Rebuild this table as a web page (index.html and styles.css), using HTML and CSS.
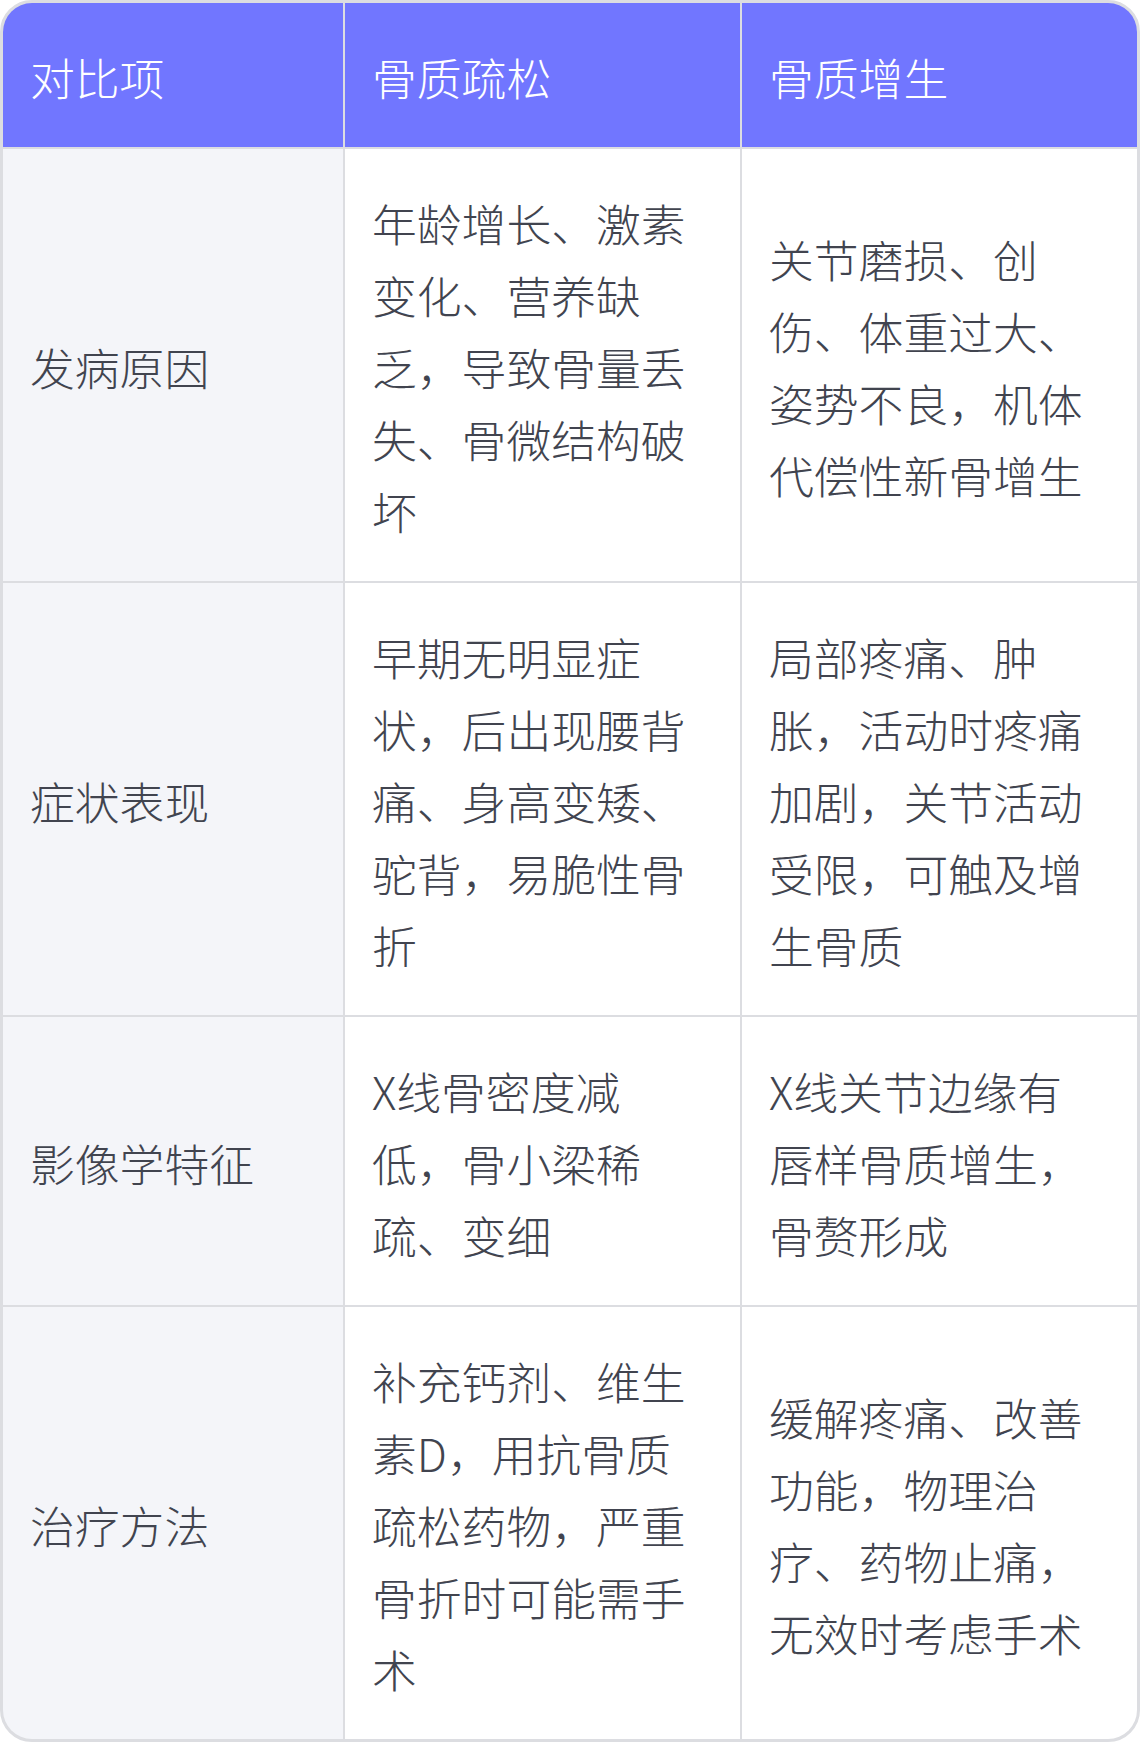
FILE: index.html
```html
<!DOCTYPE html>
<html lang="zh-CN">
<head>
<meta charset="utf-8">
<title>骨质疏松与骨质增生对比</title>
<link rel="stylesheet" href="styles.css">
</head>
<body>
<div class="table">
  <div class="cell head">对比项</div>
  <div class="cell head">骨质疏松</div>
  <div class="cell head">骨质增生</div>

  <div class="cell label">发病原因</div>
  <div class="cell">年龄增长、激素变化、营养缺乏，导致骨量丢失、骨微结构破坏</div>
  <div class="cell">关节磨损、创伤、体重过大、姿势不良，机体代偿性新骨增生</div>

  <div class="cell label">症状表现</div>
  <div class="cell">早期无明显症状，后出现腰背痛、身高变矮、驼背，易脆性骨折</div>
  <div class="cell">局部疼痛、肿胀，活动时疼痛加剧，关节活动受限，可触及增生骨质</div>

  <div class="cell label">影像学特征</div>
  <div class="cell">X线骨密度减低，骨小梁稀疏、变细</div>
  <div class="cell">X线关节边缘有唇样骨质增生，骨赘形成</div>

  <div class="cell label">治疗方法</div>
  <div class="cell">补充钙剂、维生素D，用抗骨质疏松药物，严重骨折时可能需手术</div>
  <div class="cell">缓解疼痛、改善功能，物理治疗、药物止痛，无效时考虑手术</div>
</div>
</body>
</html>
```
FILE: styles.css
```css
html, body {
  margin: 0;
  padding: 0;
  background: #ffffff;
}

.table {
  box-sizing: border-box;
  width: 1140px;
  display: grid;
  grid-template-columns: 340px 395px 395px;
  gap: 2px;
  background: #dcdde1;
  border: 3px solid #dcdde1;
  border-radius: 32px;
  overflow: hidden;
  font-family: "Noto Sans CJK SC", "Noto Sans", sans-serif;
  font-weight: 300;
  font-size: 44.8px;
  line-height: 72px;
  color: #41444f;
}

.cell {
  display: flex;
  align-items: center;
  padding: 38px 36px 34px 27px;
  background: #ffffff;
  line-break: strict;
}

.head {
  background: #7176ff;
  color: #ffffff;
}

.label {
  background: #f4f5f9;
}
```
